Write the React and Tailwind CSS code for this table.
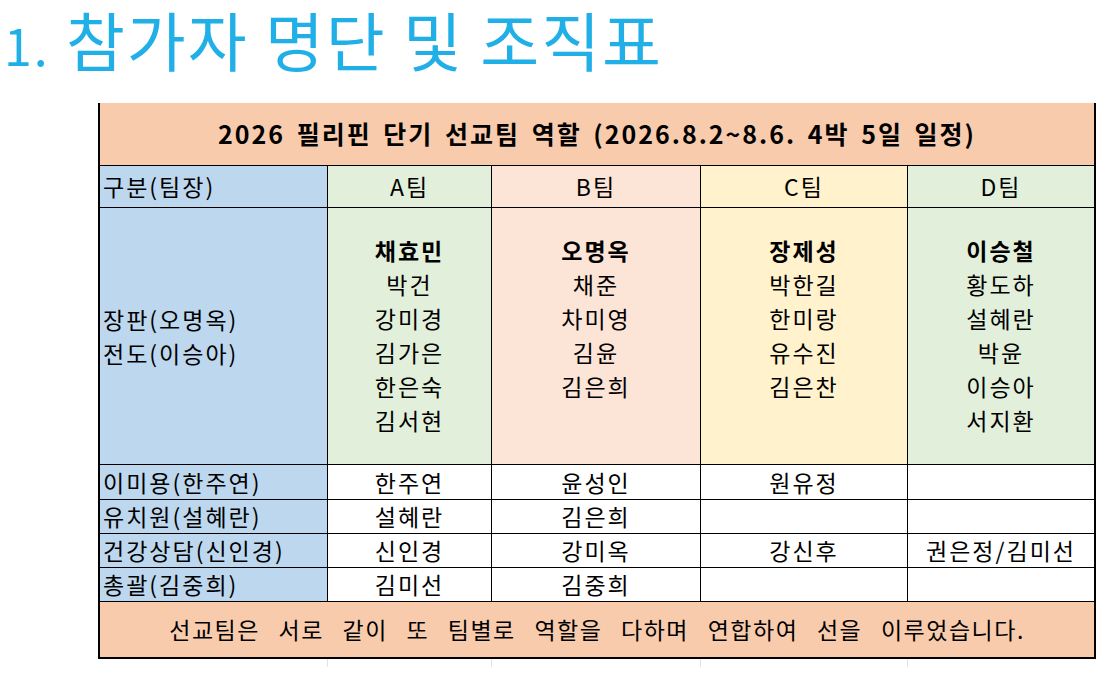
const teams = [
  { bg: 'bg-[#e2efda]', lead: '채효민', members: ['박건', '강미경', '김가은', '한은숙', '김서현'] },
  { bg: 'bg-[#fce4d6]', lead: '오명옥', members: ['채준', '차미영', '김윤', '김은희'] },
  { bg: 'bg-[#fff2cc]', lead: '장제성', members: ['박한길', '한미랑', '유수진', '김은찬'] },
  { bg: 'bg-[#e2efda]', lead: '이승철', members: ['황도하', '설혜란', '박윤', '이승아', '서지환'] },
]

const roles = [
  { label: '이미용(한주연)', cells: ['한주연', '윤성인', '원유정', ''], h: 'h-[34px]' },
  { label: '유치원(설혜란)', cells: ['설혜란', '김은희', '', ''], h: 'h-[33px]' },
  { label: '건강상담(신인경)', cells: ['신인경', '강미옥', '강신후', '권은정/김미선'], h: 'h-[33px]' },
  { label: '총괄(김중희)', cells: ['김미선', '김중희', '', ''], h: 'h-[33px]' },
]

const cols = 'grid grid-cols-[227px_163px_208px_206px_186px] gap-px'
const body = 'text-[23px] tracking-[2px]'

const App = () => {
  return (
    <div className="w-[1111px] h-[676px] bg-white overflow-hidden text-black font-['Noto_Sans_CJK_KR','Noto_Sans',sans-serif]">
      <div className="h-[103px] pl-[4px]">
        <div className="text-[#20afe6] text-[64px] leading-[76px] tracking-[2px] font-normal whitespace-nowrap">
          <span className="text-[50px]">1.</span> 참가자 명단 및 조직표
        </div>
      </div>

      <div className="ml-[98px] w-[998px] border-x-2 border-b-2 border-black bg-black">
        <div className={cols}>
          <div className="col-span-5 h-[62px] bg-[#f8cbad] flex items-center justify-center font-bold text-[25px] tracking-[2px] [word-spacing:4px] whitespace-nowrap">
            2026 필리핀 단기 선교팀 역할 (2026.8.2~8.6. 4박 5일 일정)
          </div>

          <div className={`h-[41px] bg-[#bdd7ee] flex items-center pl-[3px] ${body}`}>구분(팀장)</div>
          {['A팀', 'B팀', 'C팀', 'D팀'].map((t, i) => (
            <div key={t} className={`h-[41px] ${teams[i].bg} flex items-center justify-center ${body}`}>{t}</div>
          ))}

          <div className={`h-[256px] bg-[#bdd7ee] flex flex-col justify-center pl-[3px] leading-[34px] ${body}`}>
            <div>장판(오명옥)</div>
            <div>전도(이승아)</div>
          </div>
          {teams.map((t) => (
            <div key={t.lead} className={`h-[256px] ${t.bg} pt-[25px] flex flex-col items-center leading-[34px] ${body}`}>
              <div className="font-bold">{t.lead}</div>
              {t.members.map((m) => (
                <div key={m}>{m}</div>
              ))}
            </div>
          ))}

          {roles.map((r) => (
            <div key={r.label} className="contents">
              <div className={`${r.h} bg-[#bdd7ee] flex items-center pl-[3px] whitespace-nowrap ${body}`}>{r.label}</div>
              {r.cells.map((c, i) => (
                <div key={i} className={`${r.h} bg-white flex items-center justify-center whitespace-nowrap ${body}`}>{c}</div>
              ))}
            </div>
          ))}

          <div className="col-span-5 h-[55px] bg-[#f8cbad] flex items-center justify-center text-[23px] tracking-[1.5px] [word-spacing:12px] whitespace-nowrap">
            선교팀은 서로 같이 또 팀별로 역할을 다하며 연합하여 선을 이루었습니다.
          </div>
        </div>
      </div>

      <div className="ml-[98px] w-[998px] px-[2px] grid grid-cols-[228px_164px_209px_207px_186px] h-[8px]">
        <div className="border-r border-[#e3e3e3]"></div>
        <div className="border-r border-[#e3e3e3]"></div>
        <div className="border-r border-[#e3e3e3]"></div>
        <div className="border-r border-[#e3e3e3]"></div>
        <div></div>
      </div>
    </div>
  )
}

export default App
